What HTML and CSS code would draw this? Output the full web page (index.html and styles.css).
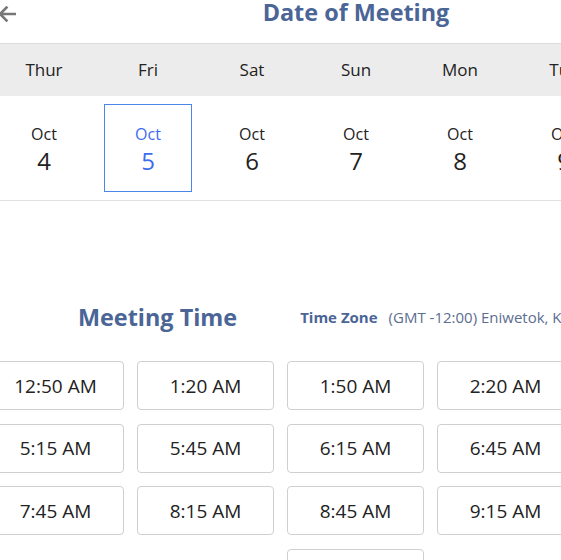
FILE: index.html
```html
<!DOCTYPE html>
<html>
<head>
<meta charset="utf-8">
<link rel="stylesheet" href="styles.css">
</head>
<body>
<div class="page">
  <header class="header">
    <div class="back">
      <svg width="18" height="16" viewBox="0 0 18 16"><path d="M17 8 H2 M8.5 1.5 L2 8 L8.5 14.5" fill="none" stroke="#777" stroke-width="2.6" stroke-linecap="square"/></svg>
    </div>
    <h1 class="title">Date of Meeting</h1>
    <div></div>
  </header>
  <div class="days">
    <div class="day">Thur</div>
    <div class="day">Fri</div>
    <div class="day">Sat</div>
    <div class="day">Sun</div>
    <div class="day">Mon</div>
    <div class="day">Tue</div>
    <div class="day">Wed</div>
  </div>
  <div class="dates">
    <div class="cell"><div class="date"><span class="mon">Oct</span><span class="num">4</span></div></div>
    <div class="cell"><div class="date selected"><span class="mon">Oct</span><span class="num">5</span></div></div>
    <div class="cell"><div class="date"><span class="mon">Oct</span><span class="num">6</span></div></div>
    <div class="cell"><div class="date"><span class="mon">Oct</span><span class="num">7</span></div></div>
    <div class="cell"><div class="date"><span class="mon">Oct</span><span class="num">8</span></div></div>
    <div class="cell"><div class="date"><span class="mon">Oct</span><span class="num">9</span></div></div>
    <div class="cell"><div class="date"><span class="mon">Oct</span><span class="num">10</span></div></div>
  </div>
  <div class="time-head">
    <h2 class="time-title">Meeting Time</h2>
    <div class="tz"><span class="tz-label">Time Zone</span><span class="tz-value">(GMT -12:00) Eniwetok, Kwajalein</span></div>
  </div>
  <div class="slots">
    <div class="slot">12:50 AM</div>
    <div class="slot">1:20 AM</div>
    <div class="slot">1:50 AM</div>
    <div class="slot">2:20 AM</div>
    <div class="slot">2:50 AM</div>
    <div class="slot">5:15 AM</div>
    <div class="slot">5:45 AM</div>
    <div class="slot">6:15 AM</div>
    <div class="slot">6:45 AM</div>
    <div class="slot">7:15 AM</div>
    <div class="slot">7:45 AM</div>
    <div class="slot">8:15 AM</div>
    <div class="slot">8:45 AM</div>
    <div class="slot">9:15 AM</div>
    <div class="slot">9:45 AM</div>
    <div class="slot">10:15 AM</div>
  </div>
</div>
</body>
</html>
```
FILE: styles.css
```css
html, body {
  margin: 0;
  padding: 0;
  overflow: hidden;
  background: #fff;
}
body {
  font-family: "Open Sans", "Liberation Sans", sans-serif;
  color: #222;
}
.page {
  width: 728px;
  margin-left: -8px;
}
.header {
  height: 43px;
  display: grid;
  grid-template-columns: 1fr auto 1fr;
  align-items: start;
}
.back {
  padding-left: 6px;
  padding-top: 6px;
  line-height: 0;
}
.title {
  margin: -4px 0 0;
  font-size: 23.4px;
  line-height: 32px;
  font-weight: 700;
  color: #4a6596;
}
.days {
  display: flex;
  height: 52px;
  background: #ececec;
  border-top: 1px solid #dcdcdc;
}
.day {
  width: 104px;
  flex: none;
  text-align: center;
  font-size: 17px;
  line-height: 52px;
  color: #222;
}
.dates {
  display: flex;
  height: 104px;
  border-bottom: 1px solid #e2e2e2;
}
.cell {
  width: 104px;
  flex: none;
  padding: 8px;
  box-sizing: border-box;
}
.date {
  height: 88px;
  box-sizing: border-box;
  border: 1px solid transparent;
  display: flex;
  flex-direction: column;
  align-items: center;
  justify-content: center;
  color: #222;
}
.date.selected {
  border-color: #4a86e8;
  color: #3d6cf0;
}
.mon {
  font-size: 16px;
  line-height: 20px;
  margin-top: 4px;
}
.num {
  font-size: 24px;
  line-height: 30px;
  margin-top: 2px;
}
.time-head {
  display: flex;
  align-items: center;
  margin-top: 100px;
  height: 32px;
}
.time-title {
  margin: 0 0 0 86px;
  font-size: 23.4px;
  line-height: 32px;
  font-weight: 700;
  color: #4a6596;
}
.tz {
  margin-left: 63px;
  font-size: 15px;
  white-space: nowrap;
}
.tz-label {
  font-weight: 700;
  color: #4a6596;
  margin-right: 11px;
}
.tz-value {
  color: #5c6e90;
}
.slots {
  width: 737px;
  margin-left: -5px;
  margin-top: 28px;
  display: flex;
  flex-wrap: wrap;
  justify-content: center;
  column-gap: 13px;
  row-gap: 13.67px;
}
.slot {
  width: 137px;
  height: 49px;
  box-sizing: border-box;
  border: 1px solid #cfcfcf;
  border-radius: 4px;
  display: flex;
  align-items: center;
  justify-content: center;
  font-size: 19px;
  color: #222;
}
```
